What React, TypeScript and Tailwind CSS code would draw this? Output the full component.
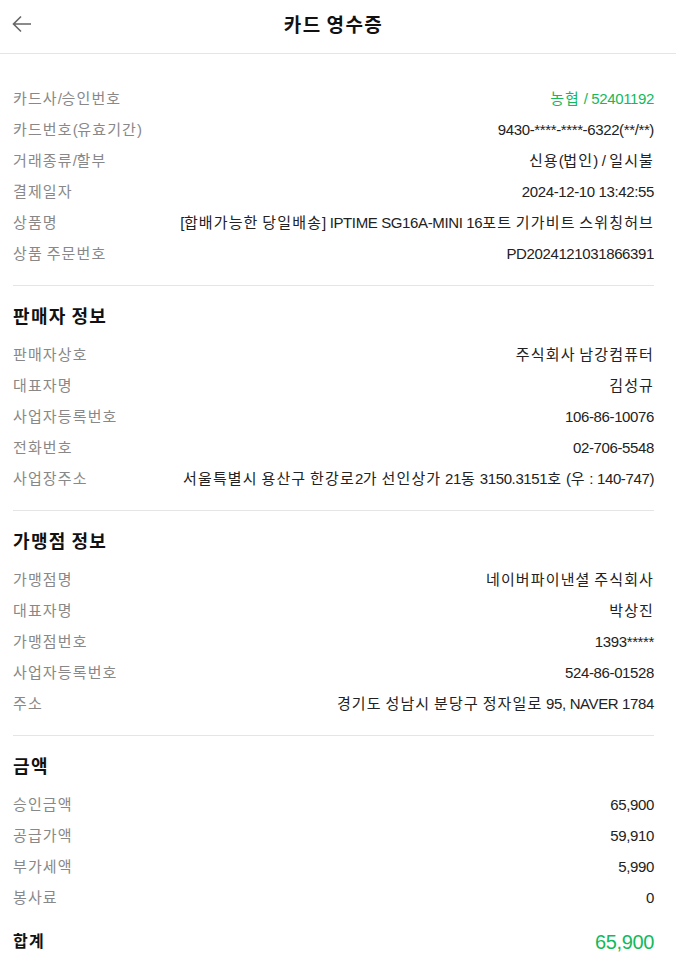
import { ReactNode } from "react";

type Row = { label: string; value: string; green?: boolean };

// Hangul runs get a bit of extra spacing so they match the wider system font in the screenshot
function Ko({ text }: { text: string }) {
  const parts = text.split(/([\uAC00-\uD7A3]+)/);
  return (
    <>
      {parts.map((p, i) =>
        /[\uAC00-\uD7A3]/.test(p) ? (
          <span key={i} className="tracking-[0.075em]">
            {p}
          </span>
        ) : (
          p
        )
      )}
    </>
  );
}

const cardRows: Row[] = [
  { label: "카드사/승인번호", value: "농협 / 52401192", green: true },
  { label: "카드번호(유효기간)", value: "9430-****-****-6322(**/**)" },
  { label: "거래종류/할부", value: "신용(법인) / 일시불" },
  { label: "결제일자", value: "2024-12-10 13:42:55" },
  { label: "상품명", value: "[합배가능한 당일배송] IPTIME SG16A-MINI 16포트 기가비트 스위칭허브" },
  { label: "상품 주문번호", value: "PD2024121031866391" },
];

const sellerRows: Row[] = [
  { label: "판매자상호", value: "주식회사 남강컴퓨터" },
  { label: "대표자명", value: "김성규" },
  { label: "사업자등록번호", value: "106-86-10076" },
  { label: "전화번호", value: "02-706-5548" },
  { label: "사업장주소", value: "서울특별시 용산구 한강로2가 선인상가 21동 3150.3151호 (우 : 140-747)" },
];

const merchantRows: Row[] = [
  { label: "가맹점명", value: "네이버파이낸셜 주식회사" },
  { label: "대표자명", value: "박상진" },
  { label: "가맹점번호", value: "1393*****" },
  { label: "사업자등록번호", value: "524-86-01528" },
  { label: "주소", value: "경기도 성남시 분당구 정자일로 95, NAVER 1784" },
];

const amountRows: Row[] = [
  { label: "승인금액", value: "65,900" },
  { label: "공급가액", value: "59,910" },
  { label: "부가세액", value: "5,990" },
  { label: "봉사료", value: "0" },
];

function Rows({ rows }: { rows: Row[] }) {
  return (
    <div>
      {rows.map((r) => (
        <div key={r.label} className="flex h-[31px] items-center justify-between gap-4">
          <span className="shrink-0 text-[#888]">
            <Ko text={r.label} />
          </span>
          <span className={"text-right whitespace-nowrap " + (r.green ? "text-[#14b95a]" : "text-[#222]")}>
            <Ko text={r.value} />
          </span>
        </div>
      ))}
    </div>
  );
}

function Title({ children }: { children: ReactNode }) {
  return (
    <h2 className="mb-[11px] flex h-6 items-center text-[18px] font-bold text-[#111]">
      <span>{children}</span>
    </h2>
  );
}

function Section({ title, rows }: { title: string; rows: Row[] }) {
  return (
    <section className="border-b border-[#e5e5e5] pt-[19px] pb-[15px]">
      <Title>
        <Ko text={title} />
      </Title>
      <Rows rows={rows} />
    </section>
  );
}

export default function App() {
  return (
    <div
      className="min-h-screen bg-white text-[15px] tracking-tight"
      style={{ fontFamily: '"Liberation Sans", "Noto Sans CJK KR", sans-serif' }}
    >
      <header className="relative flex h-[54px] items-center justify-center border-b border-[#e5e5e5] pr-[9px]">
        <button className="absolute left-[9px] top-[11px] p-[2px] text-[#666]">
          <svg width="22" height="22" viewBox="0 0 22 22" fill="none" stroke="currentColor" strokeWidth="1.6">
            <path d="M20 11H3M10 3.5L2.5 11L10 18.5" />
          </svg>
        </button>
        <h1 className="-mt-[1px] text-[19px] font-bold text-[#111]">
          <Ko text="카드 영수증" />
        </h1>
      </header>

      <main className="pl-[13px] pr-[22px]">
        <section className="border-b border-[#e5e5e5] pt-[30px] pb-[15px]">
          <Rows rows={cardRows} />
        </section>
        <Section title="판매자 정보" rows={sellerRows} />
        <Section title="가맹점 정보" rows={merchantRows} />
        <section className="pt-[19px]">
          <Title>
            <Ko text="금액" />
          </Title>
          <Rows rows={amountRows} />
          <div className="mt-3 flex h-[32px] items-center justify-between">
            <span className="text-[16px] font-bold text-[#111]">
              <Ko text="합계" />
            </span>
            <span className="text-[20px] text-[#14b95a]">65,900</span>
          </div>
        </section>
      </main>
    </div>
  );
}
